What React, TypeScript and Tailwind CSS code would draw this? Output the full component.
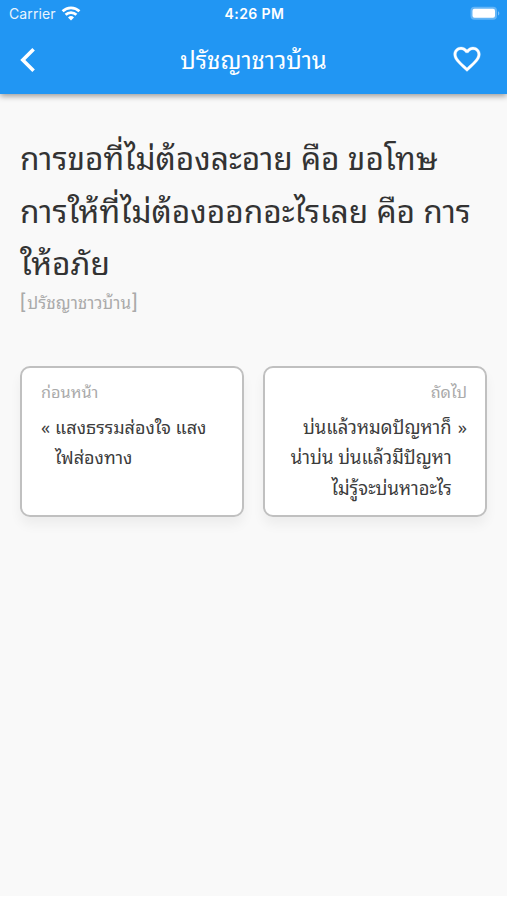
import type { ReactNode } from "react";

function StatusBar() {
  return (
    <div className="grid h-[26px] grid-cols-3 items-center pt-[2px] pr-[7px] pl-[9px] font-['Inter',sans-serif] leading-none text-white">
      <div className="flex items-center gap-[5px]">
        <span className="text-[14px] tracking-[0.1px] opacity-90">Carrier</span>
        <svg width="20" height="15" viewBox="0 0 20 15" className="-mt-[2px]" fill="none" stroke="currentColor" strokeWidth="2.7">
          <path d="M1.6 5.3a12 12 0 0 1 16.8 0" />
          <path d="M4.6 8.8a7.6 7.6 0 0 1 10.8 0" />
          <path d="M10 14.4 7 11.4a4.3 4.3 0 0 1 6 0Z" fill="currentColor" stroke="none" />
        </svg>
      </div>
      <span className="text-center text-[14px] font-semibold tracking-[0.4px]">4:26 PM</span>
      <svg width="30" height="15" viewBox="0 0 30 15" className="-mt-[2px] justify-self-end">
        <rect x="0.5" y="0.8" width="26.5" height="13" rx="4" fill="#fff" fillOpacity="0.3" />
        <rect x="2.5" y="2.8" width="22.5" height="9" rx="2" fill="#fff" />
        <path d="M28 5.3c1.8.6 1.8 3.6 0 4.2z" fill="#fff" fillOpacity="0.4" />
      </svg>
    </div>
  );
}

function AppBar({ title }: { title: string }) {
  return (
    <div className="flex h-[67px] items-center justify-between pr-[24px] pl-[20px] text-white">
      <button type="button" aria-label="Back" className="w-[36px]">
        <svg width="16" height="26" viewBox="0 0 16 26" fill="none" stroke="currentColor" strokeWidth="3.6">
          <path d="M13.6 2.2 2.8 13l10.8 10.8" />
        </svg>
      </button>
      <h1 className="-mt-[4px] text-[24px] leading-[40px]">{title}</h1>
      <button type="button" aria-label="Favorite" className="-mt-[1px]">
        <svg width="32" height="32" viewBox="0 0 24 24" fill="currentColor" stroke="currentColor" strokeWidth="0.2">
          <path d="M16.5 3c-1.74 0-3.41.81-4.5 2.09C10.91 3.81 9.24 3 7.5 3 4.42 3 2 5.42 2 8.5c0 3.78 3.4 6.86 8.55 11.54L12 21.35l1.45-1.32C18.6 15.36 22 12.28 22 8.5 22 5.42 19.58 3 16.5 3zm-4.4 15.55l-.1.1-.1-.1C7.14 14.24 4 11.39 4 8.5 4 6.5 5.5 5 7.5 5c1.54 0 3.04.99 3.57 2.36h1.87C13.46 5.99 14.96 5 16.5 5c2 0 3.5 1.5 3.5 3.5 0 2.89-3.14 5.74-7.9 10.05z" />
        </svg>
      </button>
    </div>
  );
}

function Card({ children }: { children: ReactNode }) {
  return (
    <div className="h-[151px] rounded-[10px] border-2 border-[#c0c0c0] bg-white pr-[18px] pl-[19px] pt-[8px] shadow-[0_8px_12px_rgba(0,0,0,0.05)]">
      {children}
    </div>
  );
}

export default function App() {
  return (
    <div className="h-[900px] w-[507px] overflow-hidden bg-white font-['Noto_Sans_Thai_Looped','Noto_Sans_Thai','Noto_Sans',sans-serif]">
      <div className="h-[896px] bg-[#f9f9f9] text-[#333]">
        <header className="relative h-[94px] bg-[#2196f3] shadow-[0_2px_6px_rgba(0,0,0,0.4)]">
          <StatusBar />
          <AppBar title="ปรัชญาชาวบ้าน" />
        </header>

        <main className="px-[20px] pt-[36px]">
          <p className="text-[31.7px] leading-[52.5px] whitespace-nowrap">
            การขอที่ไม่ต้องละอาย คือ ขอโทษ
            <br />
            การให้ที่ไม่ต้องออกอะไรเลย คือ การ
            <br />
            ให้อภัย
          </p>
          <p className="mt-[-1px] flex items-center text-[17px] leading-[30px] text-[#aaa]">
            <span className="mr-[2px] font-['Roboto',sans-serif] text-[20px]">[</span>
            ปรัชญาชาวบ้าน
            <span className="ml-[1px] font-['Roboto',sans-serif] text-[20px]">]</span>
          </p>

          <div className="mt-[49px] grid grid-cols-[224px_224px] gap-[19px]">
            <Card>
              <p className="text-[16.3px] leading-[30px] text-[#aaa]">ก่อนหน้า</p>
              <div className="mt-[5px] flex gap-[5px] text-[18px] leading-[30.5px] whitespace-nowrap text-[#3c3c3c]">
                <span>«</span>
                <p>
                  แสงธรรมส่องใจ แสง
                  <br />
                  ไฟส่องทาง
                </p>
              </div>
            </Card>
            <Card>
              <p className="text-right text-[16.3px] leading-[30px] text-[#aaa]">ถัดไป</p>
              <div className="mt-[5px] flex justify-end gap-[6px] text-right text-[18.4px] leading-[30.5px] whitespace-nowrap text-[#3c3c3c]">
                <p>
                  บ่นแล้วหมดปัญหาก็
                  <br />
                  น่าบ่น บ่นแล้วมีปัญหา
                  <br />
                  ไม่รู้จะบ่นหาอะไร
                </p>
                <span>»</span>
              </div>
            </Card>
          </div>
        </main>
      </div>
    </div>
  );
}
